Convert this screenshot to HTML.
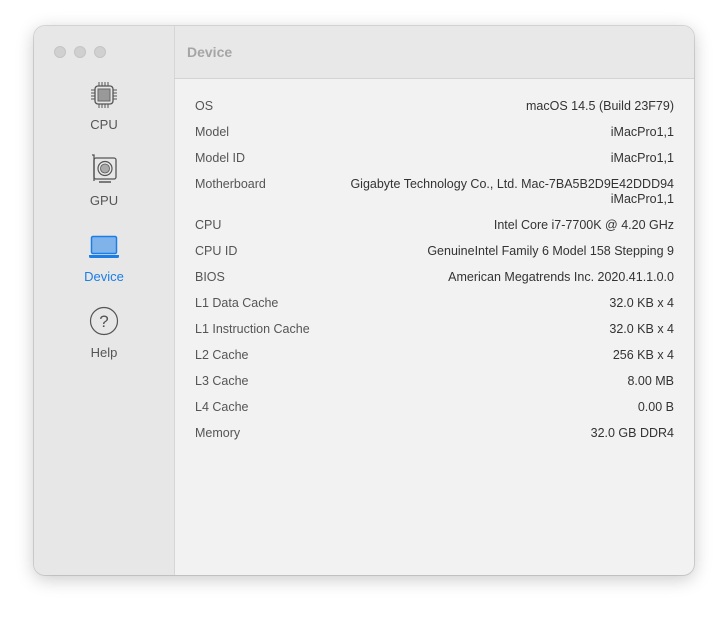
<!DOCTYPE html>
<html><head><style>
body{margin:0;width:728px;height:617px;background:#fff;font-family:"Liberation Sans",sans-serif;position:relative;overflow:hidden}
.win{position:absolute;left:34px;top:26px;width:660px;height:549px;border-radius:11px;overflow:hidden;box-shadow:0 4px 18px rgba(0,0,0,.22),0 0 0 1px rgba(0,0,0,.12);background:#f2f2f2}
.side{position:absolute;left:0;top:0;width:140px;height:100%;background:#e7e7e7;border-right:1px solid #d6d6d6}
.dot{position:absolute;top:20px;width:12px;height:12px;border-radius:50%;background:#d0d0d0;border:1px solid #c4c4c4;box-sizing:border-box}
.hdr{position:absolute;left:141px;top:0;right:0;height:52px;background:#e8e8e8;border-bottom:1px solid #d3d3d3}
.hdr span{position:absolute;left:12px;top:18px;font-size:14px;font-weight:bold;color:#a5a5a5}
.item{position:absolute;left:0;width:140px;text-align:center;font-size:13px;color:#555}
.rows{position:absolute;left:161px;top:73px;right:20px;font-size:12.5px;color:#333}
.r{display:flex;justify-content:space-between;height:26px}
.r span:first-child{color:#555}
.r span:last-child{text-align:right}
</style></head><body>
<div class="win">
<div class="side">
<div class="dot" style="left:20px"></div><div class="dot" style="left:40px"></div><div class="dot" style="left:60px"></div>
<div class="item" style="top:54px">
<svg width="30" height="30" viewBox="0 0 30 30"><rect x="6" y="6" width="18" height="18" rx="3" fill="none" stroke="#555" stroke-width="1.3"/><rect x="9" y="9" width="12" height="12" fill="#999" stroke="#666"/><g stroke="#555" stroke-width="1"><path d="M10 2v4M13 2v4M16 2v4M19 2v4M10 24v4M13 24v4M16 24v4M19 24v4M2 10h4M2 13h4M2 16h4M2 19h4M24 10h4M24 13h4M24 16h4M24 19h4"/></g></svg>
<div style="margin-top:4px">CPU</div></div>
<div class="item" style="top:128px">
<svg width="30" height="32" viewBox="0 0 30 32"><path d="M3 1h2v26" fill="none" stroke="#555" stroke-width="1.3"/><rect x="5" y="4" width="22" height="21" rx="2" fill="none" stroke="#555" stroke-width="1.3"/><circle cx="16" cy="14.5" r="7" fill="none" stroke="#555" stroke-width="1.2"/><circle cx="16" cy="14.5" r="4.5" fill="#aaa" stroke="#555" stroke-width=".8"/><path d="M10 28h12" stroke="#555" stroke-width="1.5"/></svg>
<div style="margin-top:4px">GPU</div></div>
<div class="item" style="top:206px;color:#1a7ee6">
<svg width="32" height="28" viewBox="0 0 32 28"><rect x="3.5" y="4.5" width="25" height="17" rx="1.5" fill="#7fb3ea" stroke="#1a7ee6" stroke-width="1.5"/><path d="M1 23h30v1.5a1.5 1.5 0 0 1-1.5 1.5h-27A1.5 1.5 0 0 1 1 24.5z" fill="#1a7ee6"/></svg>
<div style="margin-top:6px">Device</div></div>
<div class="item" style="top:280px">
<svg width="30" height="30" viewBox="0 0 30 30"><circle cx="15" cy="15" r="13.5" fill="none" stroke="#555" stroke-width="1.2"/><text x="15" y="21" text-anchor="middle" font-size="17" fill="#555" font-family="Liberation Sans">?</text></svg>
<div style="margin-top:6px">Help</div></div>
</div>
<div class="hdr"><span>Device</span></div>
<div class="rows">
<div class="r"><span>OS</span><span>macOS 14.5 (Build 23F79)</span></div>
<div class="r"><span>Model</span><span>iMacPro1,1</span></div>
<div class="r"><span>Model ID</span><span>iMacPro1,1</span></div>
<div class="r" style="height:41px;line-height:15px"><span>Motherboard</span><span>Gigabyte Technology Co., Ltd. Mac-7BA5B2D9E42DDD94<br>iMacPro1,1</span></div>
<div class="r"><span>CPU</span><span>Intel Core i7-7700K @ 4.20 GHz</span></div>
<div class="r"><span>CPU ID</span><span>GenuineIntel Family 6 Model 158 Stepping 9</span></div>
<div class="r"><span>BIOS</span><span>American Megatrends Inc. 2020.41.1.0.0</span></div>
<div class="r"><span>L1 Data Cache</span><span>32.0 KB x 4</span></div>
<div class="r"><span>L1 Instruction Cache</span><span>32.0 KB x 4</span></div>
<div class="r"><span>L2 Cache</span><span>256 KB x 4</span></div>
<div class="r"><span>L3 Cache</span><span>8.00 MB</span></div>
<div class="r"><span>L4 Cache</span><span>0.00 B</span></div>
<div class="r"><span>Memory</span><span>32.0 GB DDR4</span></div>
</div>
</div>
</body></html>
